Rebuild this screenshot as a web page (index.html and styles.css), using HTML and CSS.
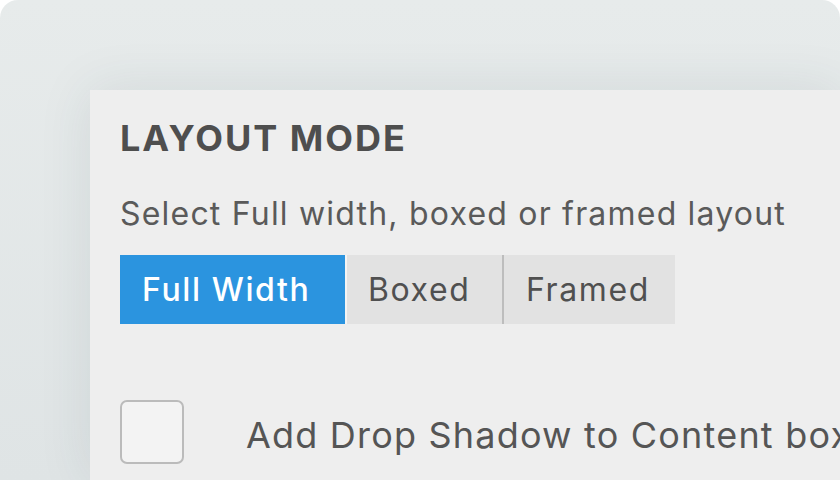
FILE: index.html
```html
<!DOCTYPE html>
<html lang="en">
<head>
  <meta charset="UTF-8">
  <title>Layout Mode</title>
  <link rel="stylesheet" href="styles.css">
</head>
<body>
  <div class="frame">
    <div class="panel">
      <h2 class="title">LAYOUT MODE</h2>
      <p class="desc">Select Full width, boxed or framed layout</p>
      <div class="segmented">
        <button class="seg seg-full active">Full Width</button>
        <button class="seg seg-boxed">Boxed</button>
        <button class="seg seg-framed">Framed</button>
      </div>
      <label class="check-row">
        <span class="checkbox"></span>
        <span class="check-label">Add Drop Shadow to Content box</span>
      </label>
    </div>
  </div>
</body>
</html>
```

FILE: styles.css
```css
html {
  box-sizing: border-box;
}
*, *::before, *::after {
  box-sizing: inherit;
}
body {
  margin: 0;
  background: #ffffff;
  font-family: Inter, "Liberation Sans", sans-serif;
  color: #555555;
}
.frame {
  height: 480px;
  overflow: hidden;
  border-radius: 18px 18px 0 0;
  background: linear-gradient(180deg, #e7ebeb, #dfe4e5);
  padding: 90px 0 0 90px;
}
.panel {
  height: 100%;
  background: #eeeeee;
  padding: 28px 0 0 30px;
  box-shadow: 0 0 50px rgba(40, 70, 80, 0.10);
  white-space: nowrap;
}
.title {
  margin: 0;
  font-size: 36px;
  line-height: 40px;
  font-weight: 700;
  letter-spacing: 2px;
  color: #4e4e4e;
}
.desc {
  margin: 38px 0 0;
  font-size: 32px;
  line-height: 36px;
  letter-spacing: 1.2px;
  color: #5a5a5a;
}
.segmented {
  display: flex;
  margin-top: 23px;
}
.seg {
  font-family: inherit;
  font-size: 32px;
  letter-spacing: 1.6px;
  height: 69px;
  padding: 0 0 0 22px;
  text-align: left;
  border: none;
  background: #e2e2e2;
  color: #505050;
  cursor: pointer;
}
.seg-full {
  width: 225px;
}
.seg-boxed {
  width: 157px;
  padding-left: 21px;
}
.seg-framed {
  width: 173px;
}
.seg + .seg {
  border-left: 2px solid #bdbdbd;
}
.seg.active {
  background: #2b94df;
  color: #ffffff;
  font-weight: 500;
}
.seg.active + .seg {
  border-left: 2px solid #f4f4f4;
}
.check-row {
  display: flex;
  align-items: center;
  gap: 62px;
  margin-top: 76px;
}
.checkbox {
  width: 64px;
  height: 64px;
  flex-shrink: 0;
  border: 2px solid #bbbbbb;
  border-radius: 7px;
  background: #f3f3f3;
}
.check-label {
  font-size: 36px;
  letter-spacing: 1.2px;
  color: #555555;
  position: relative;
  top: 3px;
}
```
